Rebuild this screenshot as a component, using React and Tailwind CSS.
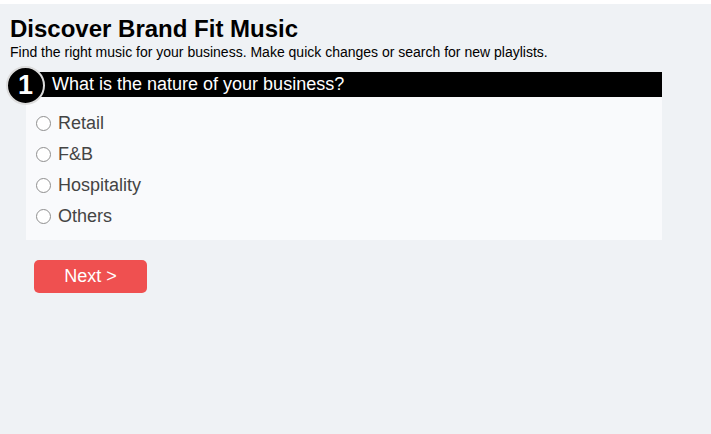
export default function App() {
  const options = ['Retail', 'F&B', 'Hospitality', 'Others'];
  return (
    <div className="h-[434px] w-[711px] bg-white pt-[4px] font-['Liberation_Sans',Arial,sans-serif]">
      <div className="h-[430px] bg-[#eff2f5] px-[10px] pt-[11px]">
        <h1 className="text-[24px] font-bold leading-[28px] text-black">Discover Brand Fit Music</h1>
        <p className="mt-[1px] text-[14px] leading-[16px] text-black">
          Find the right music for your business. Make quick changes or search for new playlists.
        </p>
        <div className="relative ml-[16px] mt-[12px] w-[636px]">
          <div className="absolute left-[-20px] top-[-6px] flex h-[39px] w-[39px] items-center justify-center rounded-full border-2 border-[#dcdcdc] bg-black text-[27px] font-bold leading-none text-white">
            1
          </div>
          <div className="flex h-[25px] items-center bg-black pl-[26px] text-[18px] text-white">
            What is the nature of your business?
          </div>
          <div className="bg-[#f9fafc] px-[10px] pb-[8px] pt-[11px]">
            {options.map((o) => (
              <label key={o} className="flex h-[31px] items-center gap-[7px] text-[18px] text-[#444]">
                <span className="h-[15px] w-[15px] rounded-full border border-[#8f8f8f] bg-white" />
                {o}
              </label>
            ))}
          </div>
        </div>
        <button className="ml-[24px] mt-[20px] flex h-[33px] w-[113px] items-center justify-center rounded-[5px] bg-[#ef5050] text-[18px] text-white">
          Next &gt;
        </button>
      </div>
    </div>
  );
}
